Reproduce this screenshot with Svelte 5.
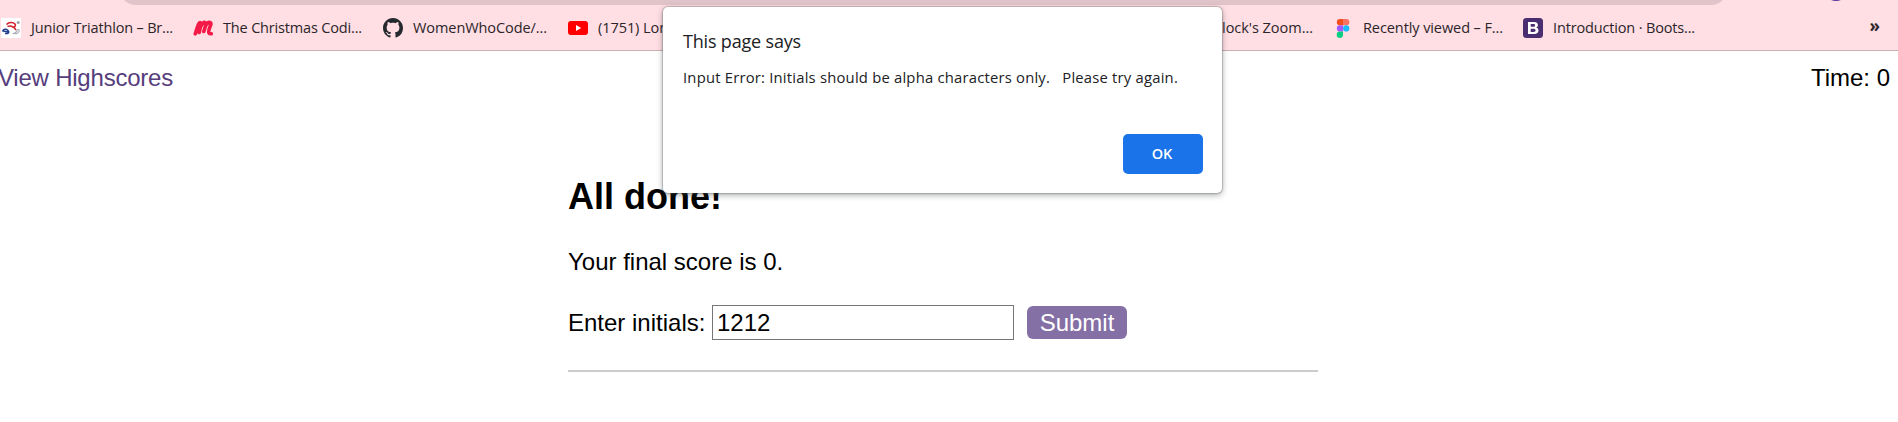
<script>
  const bookmarks = [
    { icon: 'triathlon', label: 'Junior Triathlon – Br...', width: 192, text: 142 },
    { icon: 'meetup', label: 'The Christmas Codi...', width: 190, text: 139 },
    { icon: 'github', label: 'WomenWhoCode/...', width: 185, text: 134 },
    { icon: 'youtube', label: '(1751) Lon', width: 624, text: 70 },
    { icon: '', label: "lock's Zoom...", width: 141, text: 91 },
    { icon: 'figma', label: 'Recently viewed – F...', width: 190, text: 140 },
    { icon: 'bootstrap', label: 'Introduction · Boots...', width: 192, text: 142 }
  ];

  // Spreads a label's letters evenly over a target width.
  function fit(node, width) {
    const natural = node.getBoundingClientRect().width;
    node.style.letterSpacing = `${(width - natural) / node.textContent.length}px`;
  }
</script>

<div class="window">
  <header class="chrome">
    <div class="omnibox"></div>
    <div class="avatar"></div>
    <nav class="bookmarks">
      {#each bookmarks as b}
        <div class="bookmark" style="width: {b.width}px">
          <svg class="icon" viewBox="0 0 20 20">
            {#if b.icon === 'triathlon'}
              <rect width="20" height="20" fill="#fff" />
              <path d="M5.500 6.500C8 4 12 4 14 6c1 1.500 0 3-1.500 3" fill="none" stroke="#d3202f" stroke-width="1.600" />
              <path d="M6.500 8.500c3-1 6 0 8.500 3.500" fill="none" stroke="#d3202f" stroke-width="1.500" />
              <path d="M1.500 13.500C2 11 5 10.500 7 12.500S7 16 4 15.500M2 13l5 1" fill="none" stroke="#24408e" stroke-width="1.500" />
              <path d="M11.500 15.500c3 .5 4-1.500 4.500-3s3-1 2 1-3 2.500-4 2" fill="none" stroke="#a9adb8" stroke-width="1.100" />
              <circle cx="17.200" cy="4.600" r="1.500" fill="#999eaa" />
            {:else if b.icon === 'meetup'}
              <path d="M2.300 15.800C3.500 12 4.500 8 6 5.500c1-1.500 2.300-.5 2 1L6.200 14.500M7.500 9c1.500-3 3-5 4.500-4.500s1 2 .5 3.500L10.800 13.500M12.500 8c1.500-3 3-4 4.500-3.500s1 2 .3 3.500c-1 2.500-2.300 5-1.300 7 .6 1 1.500.8 2.300.8" fill="none" stroke="#f31a48" stroke-width="3.600" stroke-linecap="round" stroke-linejoin="round" />
            {:else if b.icon === 'github'}
              <path transform="scale(1.25)" fill="#24292e" d="M8 0C3.580 0 0 3.580 0 8c0 3.540 2.290 6.530 5.470 7.590.4.070.55-.17.55-.38 0-.19-.01-.82-.01-1.490-2.010.37-2.530-.49-2.690-.94-.09-.23-.48-.94-.82-1.130-.28-.15-.68-.52-.01-.53.63-.01 1.080.58 1.230.82.72 1.210 1.870.87 2.330.66.07-.52.28-.87.51-1.070-1.780-.2-3.640-.89-3.640-3.950 0-.87.31-1.590.82-2.150-.08-.2-.36-1.020.08-2.120 0 0 .67-.21 2.200.82.640-.18 1.320-.27 2-.27s1.360.09 2 .27c1.530-1.040 2.200-.82 2.200-.82.44 1.100.16 1.920.08 2.120.51.56.82 1.270.82 2.150 0 3.070-1.870 3.750-3.650 3.950.29.25.54.73.54 1.480 0 1.070-.01 1.930-.01 2.200 0 .21.15.46.55.38A8.010 8.010 0 0 0 16 8c0-4.420-3.580-8-8-8z" />
            {:else if b.icon === 'youtube'}
              <rect y="3" width="20" height="14" rx="3" fill="#f00" />
              <path d="M8 7l5.200 3L8 13z" fill="#fff" />
            {:else if b.icon === 'figma'}
              <path d="M10 1H7a3.100 3.100 0 0 0 0 6.300h3z" fill="#f24e1e" />
              <path d="M10 1h3.200a3.100 3.100 0 0 1 0 6.300H10z" fill="#ff7262" />
              <path d="M10 7.300H7a3.150 3.150 0 0 0 0 6.300h3z" fill="#a259ff" />
              <circle cx="13.200" cy="10.450" r="3.150" fill="#1abcfe" />
              <path d="M7 13.600h3v3.150A3.150 3.150 0 1 1 7 13.600z" fill="#0acf83" />
            {:else if b.icon === 'bootstrap'}
              <rect width="20" height="20" rx="3.500" fill="#4b2e72" />
              <path fill="#fff" fill-rule="evenodd" d="M5 4h6.200c2.300 0 3.700 1.100 3.700 3 0 1.300-.8 2.300-2 2.600 1.600.3 2.600 1.400 2.600 3 0 2.200-1.600 3.400-4.200 3.400H5zM7.700 6v2.800h2.400c1.300 0 2-.5 2-1.400S11.500 6 10.300 6zm0 4.700V14h2.700c1.500 0 2.200-.6 2.200-1.700s-.8-1.600-2.300-1.600z" />
            {/if}
          </svg>
          <span class="label" use:fit={b.text}>{b.label}</span>
        </div>
      {/each}
      <span class="more">»</span>
    </nav>
  </header>

  <div class="topbar">
    <a href="#scores"><span use:fit={175}>View Highscores</span></a>
    <span>Time: 0</span>
  </div>

  <main>
    <h1>All done!</h1>
    <p>Your final score is 0.</p>
    <form>
      <label for="initials">Enter initials:</label>
      <input id="initials" type="text" value="1212" />
      <button type="button">Submit</button>
    </form>
    <hr />
  </main>

  <div class="dialog" role="alertdialog">
    <div class="title"><span use:fit={118}>This page says</span></div>
    <div class="message"><span use:fit={495}>Input Error: Initials should be alpha characters only. &nbsp; Please try again.</span></div>
    <button class="ok" type="button">OK</button>
  </div>
</div>

<style>
  :global(body) {
    margin: 0;
    background: #fff;
  }
  .window {
    position: relative;
    width: 1898px;
    height: 422px;
    overflow: hidden;
    font-family: 'Liberation Sans', Arial, sans-serif;
    font-size: 24px;
    color: #000;
  }
  .chrome {
    position: relative;
    box-sizing: border-box;
    height: 51px;
    padding-top: 5px;
    background: #ffdee4;
    border-bottom: 1px solid #c9b0b5;
    overflow: hidden;
  }
  .omnibox {
    position: absolute;
    left: 119px;
    top: -30px;
    width: 1609px;
    height: 35px;
    border-radius: 17px;
    background: #e0c4c9;
  }
  .avatar {
    position: absolute;
    left: 1824px;
    top: -23px;
    width: 24px;
    height: 24px;
    border-radius: 50%;
    background: #5a35a0;
  }
  .bookmarks {
    display: flex;
    align-items: center;
    height: 45px;
    padding-left: 1px;
    font-family: 'Open Sans', 'Noto Sans', sans-serif;
    font-size: 14.5px;
    color: #2b2529;
  }
  .bookmark {
    display: flex;
    flex: none;
    align-items: center;
    gap: 10px;
    white-space: nowrap;
  }
  .icon {
    flex: none;
    width: 20px;
    height: 20px;
  }
  .label {
    line-height: 20px;
  }
  .more {
    margin-left: auto;
    margin-right: 18px;
    font-size: 17px;
    font-weight: 700;
    line-height: 20px;
    padding-bottom: 3px;
  }
  .topbar {
    display: flex;
    justify-content: space-between;
    padding: 13px 8px 0 0;
    line-height: 28px;
  }
  .topbar a {
    margin-left: -2px;
    color: #563d7c;
    text-decoration: none;
    white-space: nowrap;
  }
  main {
    width: 750px;
    margin: 84px 0 0 568px;
  }
  h1 {
    margin: 0;
    font-size: 36px;
    line-height: 42px;
  }
  p {
    margin: 30px 0 0;
    line-height: 28px;
  }
  form {
    display: flex;
    align-items: center;
    height: 35px;
    margin-top: 29px;
  }
  label {
    line-height: 28px;
    width: 144px;
    white-space: nowrap;
  }
  input {
    box-sizing: border-box;
    width: 302px;
    height: 35px;
    padding: 0 5px 0 4px;
    border: 1px solid #767676;
    border-radius: 0;
    background: #fff;
    color: #000;
    font: inherit;
  }
  form button {
    width: 100px;
    height: 33px;
    margin-left: 13px;
    padding: 0;
    border: 0;
    border-radius: 6px;
    background: #8570a5;
    color: #fff;
    font: inherit;
  }
  hr {
    height: 2px;
    margin: 30px 0 0;
    border: 0;
    background: #ccc;
  }
  .dialog {
    position: absolute;
    left: 663px;
    top: 7px;
    box-sizing: border-box;
    display: flex;
    flex-direction: column;
    width: 559px;
    height: 186px;
    padding: 21px 19px 19px 20px;
    border-radius: 5px;
    background: #fff;
    box-shadow: 0 0 1px 1px rgba(60, 64, 67, 0.25), 0 2px 6px rgba(60, 64, 67, 0.45);
    font-family: 'Open Sans', 'Noto Sans', sans-serif;
    color: #202124;
    white-space: nowrap;
  }
  .title {
    font-size: 18px;
    line-height: 26px;
  }
  .message {
    margin-top: 13px;
    font-size: 14.8px;
    line-height: 20px;
  }
  .ok {
    align-self: flex-end;
    width: 80px;
    height: 40px;
    margin-top: auto;
    padding: 0 2px 2px 0;
    border: 0;
    border-radius: 5px;
    background: #1a73e8;
    color: #fff;
    font-family: inherit;
    font-size: 14.5px;
    font-weight: 600;
  }
</style>
